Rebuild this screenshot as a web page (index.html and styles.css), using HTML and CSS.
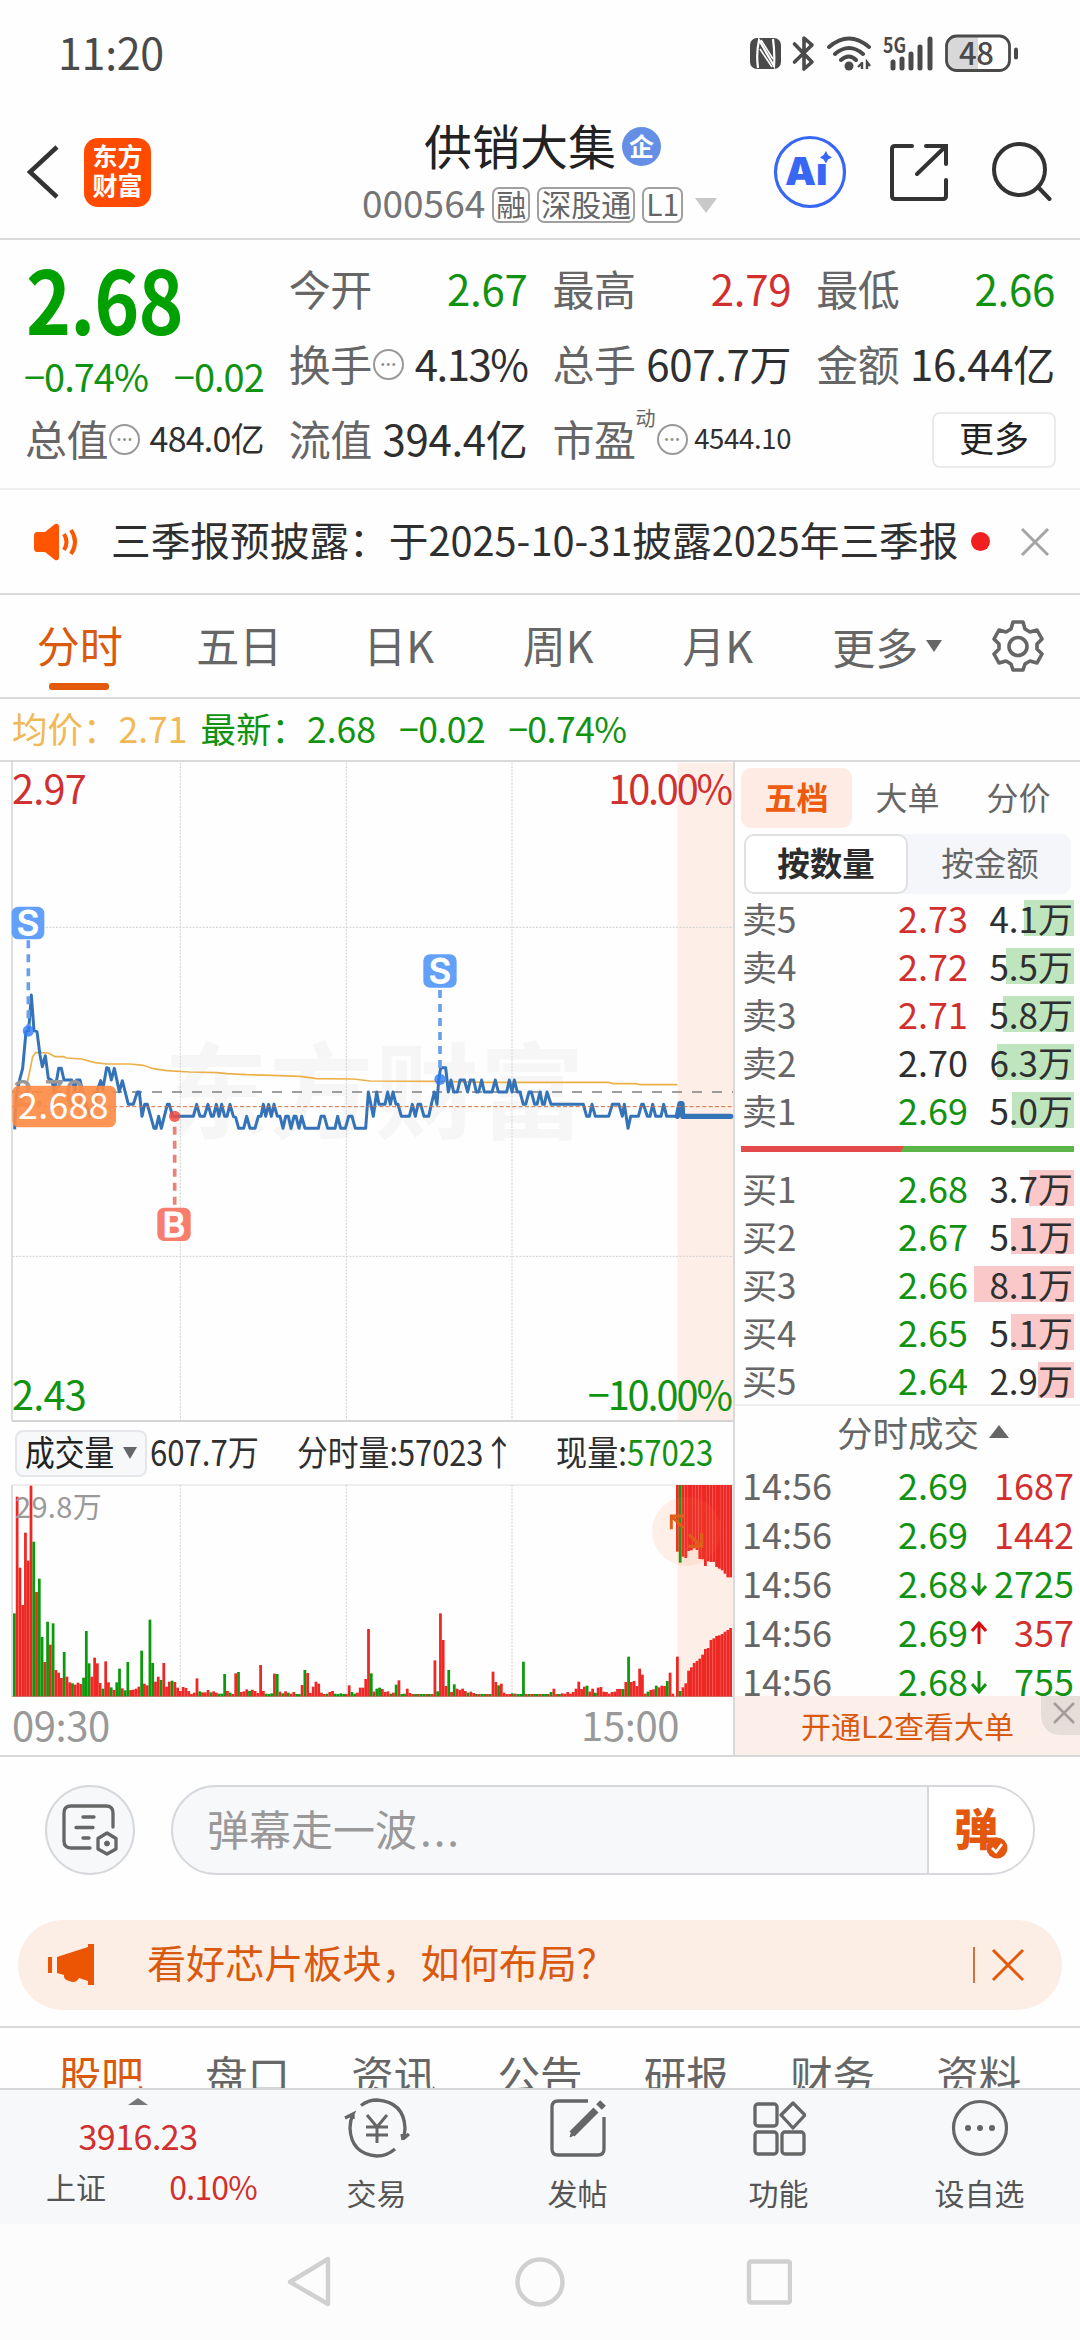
FILE: index.html
```html
<!DOCTYPE html>
<html lang="zh-CN">
<head>
    <meta charset="UTF-8">
    <meta name="viewport" content="width=device-width, initial-scale=1.0">
    <title>供销大集 000564</title>
    <link rel="stylesheet" href="styles.css">
</head>
<body>

    <div class="status-bar">
        <span class="clock">11:20</span>
        <svg width="272" height="40" viewBox="748 34 272 40" fill="none" stroke="#4a4a4a">
            <rect x="750" y="38" width="31" height="31" rx="7" fill="#4a4a4a" stroke="none"/>
            <path d="M758 68Q756 54 759 40L774 66Q775 54 773 39" stroke="#fff" stroke-width="2.200"/>
            <path d="M761 40L773 59M760 49L772 67" stroke="#fff" stroke-width="1.600"/>
            <path d="M794.500 44L812 62L804 69V38L812 45L794.500 62" stroke-width="3.600" stroke-linejoin="round" stroke-linecap="round"/>
            <path d="M829 47Q849 30 869 47M835 54Q849 42 863 54M841 60Q849 53 856 60" stroke-width="4" stroke-linecap="round"/>
            <circle cx="849" cy="66" r="4.500" fill="#4a4a4a" stroke="none"/>
            <path d="M862 62V69M862 63L858 67M867 69V62L870 66" stroke-width="2.400"/>
            <text x="883" y="53" font-size="21" font-weight="700" textLength="23" lengthAdjust="spacingAndGlyphs" fill="#4a4a4a" stroke="none">5G</text>
            <path d="M893 62V68M902 59V68M911 54V68M920 47V68M930 39V68" stroke-width="5" stroke-linecap="round"/>
            <path d="M958 37H978V70H958Q947 70 947 59V48Q947 37 958 37Z" fill="#d8d8d8" stroke="none"/>
            <rect x="946.500" y="36" width="63" height="34.500" rx="10" stroke-width="2.800"/>
            <path d="M1016 49.500V57.500" stroke-width="4" stroke-linecap="round"/>
            <text x="959" y="65" font-size="31" font-weight="500" textLength="35" fill="#4a4a4a" stroke="none">48</text>
        </svg>
    </div>

    <header class="top-bar">
        <div class="top-left">
            <svg width="34" height="56" viewBox="0 0 34 56" fill="none" stroke="#333" stroke-width="4.500"><path d="M31 3L4 28L31 53"/></svg>
            <div class="logo"><span>东方</span><span>财富</span></div>
        </div>
        <div class="stock-title">
            <div class="stock-name">供销大集<i>企</i></div>
            <div class="stock-code">
                <span>000564</span><b>融</b><b>深股通</b><b>L1</b><em></em>
            </div>
        </div>
        <div class="top-right">
            <svg width="76" height="76" viewBox="0 0 76 76">
                <circle cx="38" cy="38" r="34.500" fill="none" stroke="#3867f4" stroke-width="3.200"/>
                <text x="13" y="51" class="ai-text">Ai</text>
                <circle cx="51" cy="22" r="7.500" fill="#fefefe"/>
                <path d="M54 17L56 21L60 23.500L56 25.500L54 29.500L51.500 25.500L48 23.500L51.500 21Z" fill="#3867f4"/>
            </svg>
            <svg width="60" height="60" viewBox="0 0 60 60" fill="none" stroke="#333" stroke-width="4" stroke-linecap="round">
                <path d="M23 4H6Q3 4 3 7V54Q3 57 6 57H54Q57 57 57 54V38M37 4H57V22M56 5L28 32"/>
            </svg>
            <svg width="62" height="62" viewBox="0 0 62 62" fill="none" stroke="#333" stroke-width="4" stroke-linecap="round">
                <circle cx="29.500" cy="28.500" r="25.500"/><path d="M48 46L59.500 58"/>
            </svg>
        </div>
    </header>

    <section class="quote">
        <div class="quote-main">
            <div class="price">2.68</div>
            <div class="change"><span>−0.74%</span><span>−0.02</span></div>
        </div>
        <div class="cell"><label>今开</label><span class="green">2.67</span></div>
        <div class="cell"><label>最高</label><span class="red">2.79</span></div>
        <div class="cell"><label>最低</label><span class="green">2.66</span></div>
        <div class="cell tight"><label>换手</label><i class="tip">•••</i><span>4.13%</span></div>
        <div class="cell"><label>总手</label><span>607.7万</span></div>
        <div class="cell"><label>金额</label><span>16.44亿</span></div>
        <div class="cell mid"><label>总值</label><i class="tip">•••</i><span>484.0亿</span></div>
        <div class="cell"><label>流值</label><span>394.4亿</span></div>
        <div class="cell small"><label>市盈</label><sup>动</sup><i class="tip">•••</i><span>4544.10</span></div>
        <div class="cell"><button class="more-btn">更多</button></div>
    </section>

    <div class="notice">
        <svg width="46" height="38" viewBox="0 0 46 38">
            <path d="M4 9H12L22 1Q26 0 26 4V34Q26 38 22 37L12 29H4Q1 29 1 25V13Q1 9 4 9Z" fill="#ff5500"/>
            <path d="M31 11Q36 19 31 27M38 7Q46 19 38 31" fill="none" stroke="#ff5500" stroke-width="4"/>
        </svg>
        <p>三季报预披露：于2025-10-31披露2025年三季报</p>
        <i class="dot"></i>
        <svg width="30" height="30" viewBox="0 0 30 30" stroke="#a4a4a4" stroke-width="3"><path d="M2 2L28 28M28 2L2 28"/></svg>
    </div>

    <nav class="period-tabs">
        <span class="active">分时</span>
        <span>五日</span>
        <span>日K</span>
        <span>周K</span>
        <span>月K</span>
        <span class="period-more">更多<i></i></span>
        <svg width="54" height="54" viewBox="0 0 54 54" fill="none" stroke="#666" stroke-width="3.600" stroke-linejoin="round">
            <path d="M22 3H32L34 10L39 13L46 11L51 20L46 25V30L51 35L46 44L39 42L34 45L32 51H22L20 45L15 42L8 44L3 35L8 30V25L3 20L8 11L15 13L20 10Z"/>
            <circle cx="27" cy="27.500" r="9"/>
        </svg>
    </nav>

    <div class="avg-line">
        <span class="yellow">均价：2.71</span><span class="green">最新：2.68</span><span class="green">−0.02</span><span class="green">−0.74%</span>
    </div>

    <main class="board">
        <div class="charts">
            <!-- three drawing units per pixel -->
            <svg class="price-chart" width="734" height="660" viewBox="0 6 2202 1980">
                <rect x="2033" y="9" width="166" height="1971" fill="#fdeee7"/>
                <text class="watermark" x="492" y="1112" textLength="1260">东方财富</text>
                <g class="grid-lines">
                    <path d="M541 8V1980M1039 8V1980M1536 8V1980M38 502H2199M38 1489H2199"/>
                </g>
                <path d="M36 6V1982" stroke="#dedede" stroke-width="6"/>
                <path d="M36 1983H2199" stroke="#d4d4d4" stroke-width="6"/>
                <path d="M36 996H2199" stroke="#808080" stroke-width="5" stroke-dasharray="30 30"/>
                <polyline class="avg" points="78,985 90,930 98,890 108,877 145,879 165,890 190,890 200,894 245,897 285,908 320,912 390,912 430,916 460,926 500,932 570,936 650,938 680,941 740,944 815,946 900,949 950,956 1060,957 1110,963 1320,964 1460,967 1825,967 1840,971 1905,971 1920,974 2032,974"/>
                <polyline class="line" points="44,1108 46,1060 50,1000 60,955 68,925 78,815 86,812 94,705 102,812 111,815 120,885 127,920 136,887 145,955 155,960 162,990 170,960 176,925 184,925 192,960 215,960 225,990 230,960 240,960 258,1033 272,1069 285,1033 290,996 302,962 308,990 320,923 326,925 334,960 343,925 358,995 367,962 385,1033 400,1033 412,996 418,996 426,1069 434,1033 442,1033 462,1105 468,1105 476,1069 484,1105 502,1033 508,1033 518,1069 580,1069 590,1033 600,1069 613,1069 624,1033 634,1069 640,1069 649,1033 657,1069 665,1033 674,1069 681,1069 690,1033 700,1069 707,1072 716,1105 731,1105 740,1069 750,1105 765,1105 775,1069 783,1069 790,1033 797,1069 806,1033 814,1069 822,1033 832,1069 840,1069 849,1105 857,1069 865,1069 873,1105 882,1069 888,1069 897,1105 905,1069 915,1105 955,1105 963,1069 973,1069 983,1105 1005,1105 1013,1069 1022,1105 1036,1105 1046,1069 1056,1069 1066,1105 1097,1105 1105,996 1120,1069 1130,996 1137,1033 1155,1033 1163,996 1171,1033 1179,996 1188,1033 1194,1033 1204,1069 1228,1069 1237,1033 1246,1069 1254,1033 1262,1033 1272,1069 1286,1069 1297,1020 1303,996 1311,1033 1316,960 1322,923 1337,923 1345,996 1353,960 1361,996 1372,996 1380,960 1393,960 1403,996 1411,960 1421,960 1429,996 1436,996 1445,960 1453,996 1476,996 1486,960 1495,996 1520,996 1528,960 1536,996 1543,960 1552,996 1560,996 1570,1033 1577,1033 1587,996 1594,996 1604,1033 1611,1033 1620,996 1628,1033 1633,1033 1641,996 1653,1033 1750,1033 1760,1069 1768,1069 1776,1033 1786,1069 1826,1069 1837,1033 1857,1033 1867,1069 1873,1033 1884,1105 1892,1069 1915,1069 1925,1033 1930,1033 1942,1069 1950,1069 1958,1033 1967,1069 1983,1069 1991,1033 2000,1069 2030,1069"/>
                <polyline class="line after" points="2032,1069 2040,1031 2046,1031 2048,1069 2192,1069"/>
                <text x="40" y="1037" class="tick base">2.70</text>
                <path d="M36 1040H2199" stroke="#d5703f" stroke-width="3" stroke-dasharray="12 7"/>

                <g class="mark sell">
                    <path d="M85 541V805M1320 690V925"/>
                    <circle cx="85" cy="813" r="17"/><circle cx="1320" cy="958" r="17"/>
                    <rect x="35" y="440" width="98" height="98" rx="20"/><rect x="1270" y="583" width="100" height="100" rx="20"/>
                    <text x="84" y="526">S</text><text x="1320" y="669">S</text>
                </g>
                <g class="mark buy">
                    <path d="M524 1100V1340"/>
                    <circle cx="524" cy="1069" r="17"/>
                    <rect x="472" y="1343" width="100" height="100" rx="20"/>
                    <text x="522" y="1430">B</text>
                </g>

                <rect x="37" y="977" width="311" height="125" rx="20" fill="#ff8a42" fill-opacity=".9"/>
                <text x="54" y="1077" class="tick" fill="#fff" textLength="272">2.688</text>
                <text x="36" y="132" class="tick big" fill="#d03030" textLength="224">2.97</text>
                <text x="36" y="1950" class="tick big" fill="#109310" textLength="224">2.43</text>
                <text x="1825" y="132" class="tick big" fill="#d03030" textLength="374">10.00%</text>
                <text x="1763" y="1950" class="tick big" fill="#109310" textLength="436">−10.00%</text>
            </svg>

            <div class="volume-info">
                <div class="volume-select"><span class="narrow">成交量</span><i></i></div>
                <span class="narrow v1">607.7万</span>
                <span class="narrow v2">分时量:57023<u>↑</u></span>
                <span class="narrow v3">现量:<b class="green">57023</b></span>
            </div>

            <svg class="volume-chart" width="734" height="213" viewBox="0 730 2202 639">
                <rect x="2033" y="733" width="166" height="636" fill="#fdeee7"/>
                <g class="grid-lines"><path d="M541 733V1368M1039 733V1368M1536 733V1368"/></g>
                <path d="M36 733H2199" stroke="#dedede" stroke-width="3"/>
                <path d="M36 733V1368" stroke="#dedede" stroke-width="6"/>
                <g id="volume-bars"></g>
                <path d="M36 1368H2199" stroke="#b26d60" stroke-width="2"/>
                <text x="45" y="831" class="tick vol" textLength="260">29.8万</text>
                <circle cx="2060" cy="872" r="104" fill="#ff7b3d" fill-opacity=".11"/>
                <path d="M2050 862L2016 828M2014 866V826H2054M2067 881L2103 917M2105 877V917H2065" fill="none" stroke="#e0601a" stroke-width="9"/>
            </svg>

            <div class="time-axis"><span>09:30</span><span>15:00</span></div>
        </div>

        <aside class="orders">
            <div class="order-tabs"><span class="active">五档</span><span>大单</span><span>分价</span></div>
            <div class="order-toggle"><span class="active">按数量</span><span>按金额</span></div>
            <ul class="levels sells">
                <li><label>卖5</label><b class="red">2.73</b><span>4.1万</span><i style="width:50px"></i></li>
                <li><label>卖4</label><b class="red">2.72</b><span>5.5万</span><i style="width:68px"></i></li>
                <li><label>卖3</label><b class="red">2.71</b><span>5.8万</span><i style="width:71px"></i></li>
                <li><label>卖2</label><b>2.70</b><span>6.3万</span><i style="width:77px"></i></li>
                <li><label>卖1</label><b class="green">2.69</b><span>5.0万</span><i style="width:62px"></i></li>
            </ul>
            <div class="ratio"></div>
            <ul class="levels buys">
                <li><label>买1</label><b class="green">2.68</b><span>3.7万</span><i style="width:45px"></i></li>
                <li><label>买2</label><b class="green">2.67</b><span>5.1万</span><i style="width:63px"></i></li>
                <li><label>买3</label><b class="green">2.66</b><span>8.1万</span><i style="width:100px"></i></li>
                <li><label>买4</label><b class="green">2.65</b><span>5.1万</span><i style="width:63px"></i></li>
                <li><label>买5</label><b class="green">2.64</b><span>2.9万</span><i style="width:36px"></i></li>
            </ul>
            <div class="deals-title">分时成交<i></i></div>
            <ul class="deals">
                <li><label>14:56</label><b class="green">2.69</b><span class="red">1687</span></li>
                <li><label>14:56</label><b class="green">2.69</b><span class="red">1442</span></li>
                <li><label>14:56</label><b class="green">2.68</b><svg class="arrow down" viewBox="0 0 16 24"><path d="M8 1V22M1 14L8 22L15 14"/></svg><span class="green">2725</span></li>
                <li><label>14:56</label><b class="green">2.69</b><svg class="arrow up" viewBox="0 0 16 24"><path d="M8 23V2M1 10L8 2L15 10"/></svg><span class="red">357</span></li>
                <li><label>14:56</label><b class="green">2.68</b><svg class="arrow down" viewBox="0 0 16 24"><path d="M8 1V22M1 14L8 22L15 14"/></svg><span class="green">755</span></li>
            </ul>
            <div class="promo">
                <span>开通L2查看大单</span>
                <svg class="promo-close" width="39" height="39" viewBox="0 0 39 39">
                    <path d="M0 0H39V39H22Q0 39 0 17Z" fill="#e6dcd8"/>
                    <path d="M13 7L33 27M33 7L13 27" stroke="#a39c99" stroke-width="2.500"/>
                </svg>
            </div>
        </aside>
    </main>

    <div class="danmu">
        <div class="danmu-set">
            <svg width="56" height="52" viewBox="0 0 56 52" fill="none" stroke="#666" stroke-width="3.300" stroke-linecap="round" stroke-linejoin="round">
                <path d="M28 44H9Q2 44 2 37V9Q2 2 9 2H44Q51 2 51 9V23M21 13H32M14 23.500H31M21 34H27"/>
                <path d="M45 29L54 34.500V45L45 50L36 45V34.500Z"/><circle cx="45" cy="39.500" r="2.500" fill="#666" stroke-width="1"/>
            </svg>
        </div>
        <div class="danmu-input">
            <span>弹幕走一波<u>...</u></span>
            <div class="danmu-switch">弹
                <svg width="22" height="22" viewBox="0 0 22 22"><circle cx="11" cy="11" r="10.500" fill="#e4580e"/><path d="M6 11L10 15L16 7" fill="none" stroke="#fff" stroke-width="2.600"/></svg>
            </div>
        </div>
    </div>

    <div class="banner">
        <svg width="46" height="42" viewBox="0 0 46 42" fill="#ec5503">
            <rect x="0" y="13" width="4" height="16"/>
            <path d="M9 13L40 3V0H46V41H40V37L31 34Q28 40 21 37Q15 35 16 31L9 29Z"/>
        </svg>
        <p>看好芯片板块，如何布局？</p>
        <i></i>
        <svg width="34" height="34" viewBox="0 0 34 34" stroke="#e4580e" stroke-width="3"><path d="M2 2L32 32M32 2L2 32"/></svg>
    </div>

    <nav class="content-tabs">
        <span class="active">股吧</span><span>盘口</span><span>资讯</span><span>公告</span><span>研报</span><span>财务</span><span>资料</span>
    </nav>

    <footer class="bottom-bar">
        <div class="index-box">
            <i></i>
            <strong>3916.23</strong>
            <p><span>上证</span><b>0.10%</b></p>
        </div>
        <div class="action">
            <svg width="66" height="60" viewBox="0 0 66 60" fill="none" stroke="#666" stroke-width="3.300">
                <path d="M17 7.500Q24 2 33 2Q60 4 61 30Q61 36 59 41L65 36M59 42L58 36M51 51Q43 58 33 58Q7 56 6 30Q6 23 9 16L1 20M9 15V21"/>
                <path d="M23 17L33 29L43 17M33 29V45M22 29H44M22 37H44" stroke-width="3"/>
            </svg>
            <span>交易</span>
        </div>
        <div class="action">
            <svg width="60" height="60" viewBox="0 0 60 60" fill="none" stroke="#666" stroke-width="3.300">
                <path d="M40 3H10Q4 3 4 9V51Q4 57 10 57H50Q56 57 56 51V19"/>
                <path d="M24 36L48 12" stroke-width="7"/><path d="M51 9L55 5" stroke-width="8"/><path d="M22 39L28 36L24 33Z" stroke-width="1" fill="#666"/>
            </svg>
            <span>发帖</span>
        </div>
        <div class="action">
            <svg width="54" height="56" viewBox="0 0 54 56" fill="none" stroke="#666" stroke-width="3.300" stroke-linejoin="round">
                <rect x="3" y="4" width="22" height="22" rx="3"/><rect x="3" y="32" width="22" height="22" rx="3"/><rect x="30" y="32" width="22" height="22" rx="3"/>
                <path d="M41 3L53 15L41 28L29 15Z"/>
            </svg>
            <span>功能</span>
        </div>
        <div class="action">
            <svg width="58" height="58" viewBox="0 0 58 58" fill="#666">
                <circle cx="29" cy="29" r="26.500" fill="none" stroke="#666" stroke-width="3.200"/>
                <circle cx="17" cy="29" r="3"/><circle cx="29" cy="29" r="3"/><circle cx="41" cy="29" r="3"/>
            </svg>
            <span>设自选</span>
        </div>
    </footer>

    <div class="system-nav">
        <svg width="506" height="52" viewBox="286 2256 506 52" fill="none" stroke="#d0d0d0" stroke-width="4.400" stroke-linejoin="round">
            <path d="M328 2259V2304L290 2282Z"/><circle cx="540" cy="2282" r="22.500"/><rect x="749" y="2261.500" width="41" height="41" rx="2"/>
        </svg>
    </div>

    <script>
        // minute volume, one entry per bar: r = up, g = down
        const minutes = 'g250 r600 r387 r275 r492 r408 r633 g465 r314 g354 g179 r104 g225 r156 g220 r80 r72 r56 g134 r60 r43 g40 r36 r42 r38 g57 g197 g100 r60 r117 r100 r41 g24 r106 r43 g28 r20 g43 g84 r25 g19 g104 r20 r21 r24 r30 g138 r39 r34 g231 g101 r45 r60 g50 r101 r30 r45 g48 r44 r27 r17 r29 r26 r17 r8 r12 r55 g16 r13 r13 r20 g13 r16 r12 g9 g9 g68 r17 g12 r8 r70 g74 r14 r16 r22 g17 r21 r17 r11 r95 r17 g9 g8 g10 r69 g68 r15 g10 r16 g12 r9 r14 g8 g8 r35 g80 r71 r11 r30 r45 r39 r12 r8 g9 r14 r17 g9 g8 g10 g8 r8 r34 g14 g9 r12 r27 r27 r53 r203 g70 r15 g24 g27 r23 r14 r16 g9 r12 g36 r49 g8 g9 r24 r11 r8 g8 r8 g8 g8 r8 g8 r8 r109 g16 r250 r170 r32 g80 r14 g37 r24 r20 r24 r17 g12 r15 r11 g8 r8 g8 g8 r8 g8 r75 r44 g34 r39 r12 r8 r8 g10 r9 g8 g8 g105 r8 g8 r8 g8 g8 r8 g8 g8 r8 g14 r24 r8 g8 r10 r9 r14 r9 r14 r24 r45 r23 r30 g33 r15 r24 g12 r27 r29 r15 r14 r9 r14 r15 r23 r23 g23 r44 g120 r44 r47 r32 r84 r66 r9 g15 r20 r22 g33 r28 r33 r32 g47 r72 r9';
        const afterTop = 'r200 g233 r215 r219 r198 r196 r190 r195 r222 r223 r243 r229 r231 r231 r246 r251 r256 r266 r277 r277';
        const afterBottom = 'r120 g17 r28 r40 r78 r88 r101 r107 r114 r126 r143 r146 r170 r175 r182 r184 r188 r195 r200 r206';

        function drawBars(list, left, step, fromTop) {
            return list.split(' ').map((item, i) => {
                const height = Number(item.slice(1));
                const y = fromTop ? 733 : 1368 - height;
                const x = (left + i * step).toFixed(1);
                return `<rect class="${item[0]}" x="${x}" y="${y}" width="${step}" height="${height}"/>`;
            }).join('');
        }

        document.querySelector('#volume-bars').innerHTML =
            drawBars(minutes, 39, 8.3, false) +
            drawBars(afterTop, 2028, 8.4, true) +
            drawBars(afterBottom, 2028, 8.4, false);
    </script>
</body>
</html>
```

FILE: styles.css
```css
* {
    box-sizing: border-box;
}
body {
    margin: 0;
    width: 1080px;
    height: 2340px;
    overflow: hidden;
    background: #fefefe;
    color: #2f2f2f;
    font-family: "Noto Sans CJK SC", sans-serif;
    font-size: 36px;
    line-height: 1;
    white-space: nowrap;
}
svg {
    display: block;
    flex-shrink: 0;
}
i, em {
    font-style: normal;
}
u {
    text-decoration: none;
}
ul, p {
    margin: 0;
    padding: 0;
    list-style: none;
}
.red {
    color: #d22f2f;
}
.green {
    color: #119211;
}
.yellow {
    color: #efb956;
}

.status-bar {
    height: 108px;
    padding: 0 60px 0 58px;
    display: flex;
    align-items: center;
    justify-content: space-between;
}
.clock {
    font-size: 43px;
    letter-spacing: -.3px;
    color: #4a4a4a;
    padding-bottom: 6px;
}

.top-bar {
    height: 132px;
    border-bottom: 2px solid #d9d9d9;
    display: flex;
    justify-content: space-between;
    padding: 0 28px 0 26px;
}
.top-left {
    display: flex;
    align-items: center;
    gap: 24px;
    width: 303px;
    height: 128px;
}
.logo {
    width: 67px;
    height: 69px;
    border-radius: 14px;
    background: #ff4b00;
    color: #fff;
    font-size: 25px;
    font-weight: 700;
    display: flex;
    flex-direction: column;
    align-items: center;
    gap: 4px;
    padding-top: 5px;
}
.stock-title {
    width: 365px;
    margin-right: 28px;
    padding-top: 11px;
}
.stock-name {
    display: flex;
    justify-content: center;
    align-items: center;
    gap: 6px;
    height: 50px;
    padding-left: 12px;
    font-size: 48px;
    color: #222;
}
.stock-name i {
    width: 39px;
    height: 39px;
    border-radius: 50%;
    background: #658fe5;
    color: #fff;
    font-size: 25px;
    font-weight: 700;
    text-align: center;
    line-height: 36px;
    margin-top: 4px;
}
.stock-code {
    display: flex;
    align-items: center;
    gap: 7px;
    height: 36px;
    margin-top: 18px;
    padding-left: 8px;
    font-size: 37px;
    color: #757575;
}
.stock-code span {
    padding-bottom: 5px;
}
.stock-code b {
    height: 36px;
    border: 2px solid #a0a0a0;
    border-radius: 7px;
    padding: 0 2px;
    font-size: 30px;
    font-weight: 400;
    line-height: 28px;
    color: #666;
}
.stock-code em {
    margin-left: 5px;
    border: 11px solid transparent;
    border-top: 15px solid #c8c8c8;
    border-bottom: 0;
}
.top-right {
    display: flex;
    align-items: center;
    gap: 41px;
    height: 128px;
}
.ai-text {
    font: 900 39px Inter, sans-serif;
    fill: #3867f4;
}

.quote {
    height: 250px;
    padding: 13px 25px 0 26px;
    display: grid;
    grid-template-columns: repeat(4, 1fr);
    grid-auto-rows: 75px;
    column-gap: 26px;
    border-bottom: 2px solid #eee;
}
.quote-main {
    grid-row: span 2;
    color: #00a000;
}
.price {
    font-size: 87px;
    font-weight: 700;
    line-height: 88px;
    letter-spacing: -1px;
    transform: scaleX(.88);
    transform-origin: left;
}
.change {
    display: flex;
    justify-content: space-between;
    font-size: 38px;
    letter-spacing: -1px;
    margin: 16px 0 0 -2px;
    color: #119211;
}
.cell {
    display: flex;
    align-items: center;
    font-size: 42px;
    padding-bottom: 5px;
}
.cell label {
    color: #666;
    letter-spacing: -.5px;
    margin-left: -1px;
}
.cell span {
    margin-left: auto;
    letter-spacing: -.3px;
}
.cell.tight span {
    letter-spacing: -1.5px;
}
.cell.mid span {
    font-size: 34px;
    letter-spacing: -.8px;
}
.cell.small span {
    font-size: 27.500px;
}
.cell sup {
    font-size: 20px;
    color: #666;
    align-self: flex-start;
    margin-top: 5px;
}
.tip {
    width: 31px;
    height: 31px;
    border: 2px solid #999;
    border-radius: 50%;
    color: #888;
    font: 10px/27px "Liberation Sans", sans-serif;
    letter-spacing: 2px;
    text-align: center;
    padding-left: 2px;
    margin: 2px 0 0 1px;
}
.more-btn {
    width: 124px;
    height: 56px;
    margin: 3px -1px 0 auto;
    border: 2px solid #e9eaec;
    border-radius: 8px;
    background: #fff;
    color: #222;
    font: 35px/46px "Noto Sans CJK SC", sans-serif;
    padding: 0 0 5px;
}

.notice {
    height: 105px;
    padding: 0 30px 0 33px;
    display: flex;
    align-items: center;
    border-bottom: 2px solid #d9d9d9;
}
.notice p {
    width: 860px;
    margin-left: 32px;
    padding-bottom: 5px;
    font-size: 39.700px;
}
.notice .dot {
    width: 19px;
    height: 19px;
    border-radius: 50%;
    background: #f02020;
    margin-right: 30px;
}

.period-tabs {
    height: 104px;
    border-bottom: 2px solid #d9d9d9;
    display: flex;
    align-items: center;
    font-size: 43px;
    color: #666;
    padding-right: 35px;
}
.period-tabs span {
    width: 159.500px;
    height: 102px;
    line-height: 99px;
    text-align: center;
}
.period-tabs .active {
    color: #d9590f;
    position: relative;
}
.period-tabs .active::after {
    content: "";
    position: absolute;
    left: 49px;
    bottom: 7px;
    width: 60px;
    height: 7px;
    border-radius: 3px;
    background: #e35a0c;
}
.period-tabs .period-more {
    display: flex;
    align-items: center;
    justify-content: center;
    gap: 8px;
    flex: 1;
    padding-right: 14px;
}
.period-more i {
    border: 8px solid transparent;
    border-top: 12px solid #666;
    border-bottom: 0;
}

.avg-line {
    height: 63px;
    border-bottom: 2px solid #d9d9d9;
    padding: 0 0 4px 12px;
    display: flex;
    align-items: center;
    font-size: 35.500px;
}
.avg-line .yellow {
    margin-right: 13px;
}
.avg-line .green + .green {
    margin-left: 23px;
    letter-spacing: -.5px;
}

.board {
    height: 995px;
    display: flex;
    border-bottom: 2px solid #d9d9d9;
}
.charts {
    width: 735px;
    border-right: 2px solid #d9d9d9;
}
.grid-lines path {
    stroke: #d0d0d0;
    stroke-width: 3;
    stroke-dasharray: 6 4;
    fill: none;
}
.watermark {
    font-size: 312px;
    font-weight: 700;
    fill: #f6f6f6;
}
.avg {
    fill: none;
    stroke: #ecb04a;
    stroke-width: 5;
}
.line {
    fill: none;
    stroke: #3573b9;
    stroke-width: 9;
    stroke-linejoin: round;
}
.line.after {
    stroke-width: 16;
    stroke-linecap: round;
}
.tick {
    font-size: 107px;
}
.tick.base {
    font-weight: 500;
    fill: #999;
}
.tick.big {
    font-size: 119px;
}
.tick.vol {
    font-size: 87px;
    fill: #999;
}
.mark path {
    stroke-width: 11;
    stroke-dasharray: 24 18;
}
.mark text {
    font: 500 104px Inter, sans-serif;
    fill: #fff;
    stroke: #fff;
    stroke-width: 3px;
    text-anchor: middle;
}
.sell rect {
    fill: #62a0fa;
}
.sell circle {
    fill: #2c7cf5;
    fill-opacity: .8;
}
.sell path {
    stroke: #69a0e8;
}
.buy rect {
    fill: #f77d6c;
}
.buy circle {
    fill: #f04a42;
    fill-opacity: .85;
}
.buy path {
    stroke: #e8837a;
}

.volume-info {
    height: 62px;
    display: flex;
    align-items: center;
    padding-left: 15px;
    font-size: 35px;
}
.volume-select {
    width: 133px;
    height: 47px;
    border: 2px solid #e4e6ea;
    border-radius: 8px;
    background: #f7f8fa;
    display: flex;
    align-items: center;
    padding-left: 8px;
    color: #222;
}
.volume-select .narrow {
    width: 98px;
    transform: scaleX(.85);
}
.volume-select i {
    border: 7px solid transparent;
    border-top: 12px solid #666;
    border-bottom: 0;
}
.narrow {
    transform: scaleX(.89);
    transform-origin: left;
    padding-bottom: 5px;
}
.narrow b {
    font-weight: 400;
}
.v1 {
    width: 148px;
    margin-left: 3px;
}
.v2 {
    width: 262px;
    transform: scaleX(.88);
}
.g {
    fill: #0b9a0b;
}
.r {
    fill: #ee2825;
}
.time-axis {
    display: flex;
    justify-content: space-between;
    padding: 7px 54px 0 12px;
    font-size: 40px;
    letter-spacing: -.4px;
    color: #999;
}

.orders {
    width: 345px;
    position: relative;
}
.order-tabs {
    display: grid;
    grid-template-columns: repeat(3, 111px);
    height: 60px;
    margin: 6px 0 0 6px;
    font-size: 32px;
    line-height: 56px;
    text-align: center;
    color: #666;
}
.order-tabs .active {
    border-radius: 10px;
    background: #feece4;
    color: #ee5a0e;
    font-weight: 700;
}
.order-toggle {
    display: grid;
    grid-template-columns: 164px 164px;
    height: 60px;
    width: 327px;
    margin: 6px 0 6px 9px;
    border-radius: 10px;
    background: #f5f6f9;
    font-size: 32.500px;
    line-height: 56px;
    text-align: center;
    color: #666;
}
.order-toggle .active {
    border: 2px solid #dfe0e3;
    border-radius: 10px;
    background: #fff;
    color: #2c2c2c;
    font-weight: 700;
    line-height: 52px;
}
.levels li {
    height: 48px;
    padding: 0 7px 10px;
    display: flex;
    align-items: center;
    position: relative;
    font-size: 35px;
}
.levels label, .deals label {
    width: 156px;
    color: #666;
    padding-bottom: 4px;
}
.levels b, .deals b {
    font-weight: 400;
    font-size: 36px;
    padding-bottom: 4px;
}
.levels span, .deals span {
    margin-left: auto;
    padding-bottom: 4px;
}
/* depth bar under the amount */
.levels i {
    position: absolute;
    right: 6px;
    top: 0;
    height: 36px;
    z-index: -1;
}
.sells i {
    background: #bfe5bf;
}
.buys i {
    background: #fac8c8;
}
.ratio {
    height: 6px;
    margin: 6px 6px 18px;
    background: linear-gradient(120deg, #e34b4b 48.500%, #5bb548 48.500%);
}
.deals-title {
    height: 57px;
    margin-top: -6px;
    border-top: 2px solid #eee;
    display: flex;
    align-items: center;
    gap: 10px;
    font-size: 35.500px;
    padding: 0 0 4px 102px;
    color: #666;
}
.deals-title i {
    border: 10px solid transparent;
    border-bottom: 13px solid #666;
    border-top: 0;
}
.deals {
    height: 237px;
    overflow: hidden;
}
.deals li {
    height: 49px;
    padding: 0 6px 0 7px;
    display: flex;
    align-items: center;
    font-size: 36px;
}
.arrow {
    width: 16px;
    height: 24px;
    margin-left: 3px;
    fill: none;
    stroke-width: 3;
}
.arrow.down {
    stroke: #119211;
}
.arrow.up {
    stroke: #d60f0f;
}
.promo {
    position: absolute;
    left: 0;
    right: 0;
    bottom: 0;
    height: 59px;
    background: #fcefea;
    color: #d9590f;
    font-size: 30px;
    line-height: 58px;
    padding-left: 66px;
}
.promo-close {
    position: absolute;
    right: 0;
    top: 0;
}

.danmu {
    height: 163px;
    padding: 28px 45px 0;
    display: flex;
    gap: 36px;
}
.danmu-set {
    width: 90px;
    height: 90px;
    border: 2px solid #d6d8dc;
    border-radius: 50%;
    background: #f7f8fa;
    display: flex;
    align-items: center;
    justify-content: center;
}
.danmu-input {
    flex: 1;
    height: 90px;
    border: 2px solid #d6d8dc;
    border-radius: 45px;
    background: #f7f8fa;
    overflow: hidden;
    display: flex;
    justify-content: space-between;
    padding-left: 34px;
    font-size: 42px;
    line-height: 82px;
    color: #999;
}
.danmu-input u {
    letter-spacing: 2px;
    margin-left: 3px;
}
.danmu-switch {
    width: 106px;
    border-left: 2px solid #d6d8dc;
    background: #fff;
    color: #e4580e;
    font-size: 44px;
    font-weight: 900;
    line-height: 80px;
    padding-left: 25px;
    position: relative;
}
.danmu-switch svg {
    position: absolute;
    left: 57px;
    top: 50px;
}

.banner {
    height: 90px;
    margin: 0 18px;
    padding: 0 37px 0 30px;
    border-radius: 45px;
    background: #fceee4;
    display: flex;
    align-items: center;
    color: #d9590f;
}
.banner p {
    flex: 1;
    padding: 0 0 6px 53px;
    font-size: 39.100px;
}
.banner i {
    width: 2px;
    height: 36px;
    background: #cf7341;
    margin-right: 16px;
}

.content-tabs {
    height: 62px;
    margin-top: 16px;
    border-top: 2px solid #d9d9d9;
    padding: 25px 28px 0;
    display: grid;
    grid-template-columns: repeat(7, 1fr);
    overflow: hidden;
    font-size: 42.500px;
    text-align: center;
    color: #666;
}
.content-tabs .active {
    color: #d9590f;
}

.bottom-bar {
    height: 136px;
    border-top: 2px solid #d4d6d8;
    background: #f7f8fa;
    display: grid;
    grid-template-columns: 276px repeat(4, 201px);
    color: #555;
    font-size: 30px;
}
.index-box {
    padding-top: 8px;
    text-align: center;
}
.index-box i {
    display: block;
    width: 20px;
    margin-left: 128px;
    border: 10px solid transparent;
    border-bottom: 7px solid #777;
    border-top: 0;
}
.index-box strong {
    display: block;
    margin-top: 14px;
    font-size: 34px;
    font-weight: 400;
    color: #d22f2f;
    letter-spacing: -.5px;
}
.index-box p {
    display: flex;
    justify-content: space-between;
    align-items: center;
    margin-top: 17px;
    padding: 0 19px 0 46px;
}
.index-box b {
    font-size: 32px;
    font-weight: 400;
    color: #d22f2f;
    letter-spacing: -.8px;
}
.action {
    display: flex;
    flex-direction: column;
    align-items: center;
}
.action svg {
    height: 60px;
    margin: 8px 0 19px;
}

.system-nav {
    height: 116px;
    background: #fcfcfc;
    padding: 32px 0 0 286px;
}
```
